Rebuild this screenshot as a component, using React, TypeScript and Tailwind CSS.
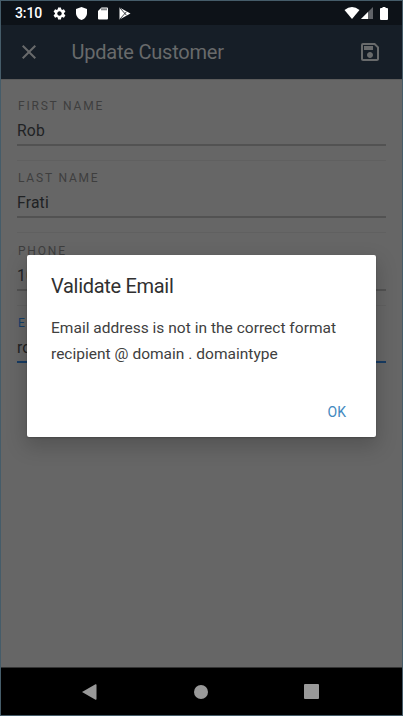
import React from 'react';
import { MdClose, MdOutlineSave, MdSettings } from 'react-icons/md';

type FieldProps = { label: string; value: string; active?: boolean };

function Field({ label, value, active = false }: FieldProps) {
  return (
    <div className="h-[72.4px] shrink-0">
      <div className={`box-content h-[15px] pt-[17px] pl-px text-[12px] leading-[16px] tracking-[1.8px] ${active ? 'text-[#153f6b]' : 'text-[#3e3e3e]'}`}>{label}</div>
      <div className={`box-content h-[26px] pt-[5px] text-[15.7px] leading-[26px] tracking-[0.2px] text-[#202224] border-b-2 ${active ? 'border-[#173b62]' : 'border-[#525252]'}`}>{value}</div>
      {!active && <div className="mt-[14px] h-px bg-[#606060]" />}
    </div>
  );
}

function StatusBar() {
  return (
    <div className="flex h-6 shrink-0 items-center bg-[#0d1218] pl-3.5 text-white">
      <span className="w-[37px] text-[14px] font-medium leading-6 tracking-[-0.1px]">3:10</span>
      <MdSettings className="h-[15px] w-[15px]" />
      <svg className="ml-[8.500px] h-[13px] w-[11px]" viewBox="0 0 11 13" fill="currentColor"><path d="M5.500 0 11 2v4c0 3.200-2.200 6-5.500 7C2.200 12 0 9.200 0 6V2Z" /></svg>
      <svg className="ml-[11.500px] h-[13px] w-[10px]" viewBox="0 0 10 13"><path fill="white" d="M3.500.5H9Q10 .5 10 1.500V11.500Q10 12.500 9 12.500H1Q0 12.500 0 11.500V4Z" /><path stroke="#0d1218" strokeWidth="1" d="M4 1.300v2M6 1.300v2M8 1.300v2" /></svg>
      <svg className="ml-[11px] h-[13px] w-[12px]" viewBox="0 0 12 13"><path fill="white" d="M.5.500 11.500 6.500.500 12.500Z" /><path stroke="#0d1218" strokeWidth=".8" fill="none" d="m1 1 6.500 7.300M1 12l6.500-7.300" /></svg>
      <div className="ml-auto mr-[14.500px] flex items-center">
        <svg className="h-[12px] w-[16px]" viewBox="0 0 16 12" fill="white"><path d="M.5 3Q8-3 15.500 3L8 12Z" /></svg>
        <svg className="ml-[1px] h-[12px] w-[12px]" viewBox="0 0 12 12"><path fill="#606368" d="M12 0v12H0Z" /><path fill="white" d="M7 5v7H0Z" /></svg>
        <svg className="ml-[7px] h-[13px] w-[8px]" viewBox="0 0 8 13" fill="white"><path d="M2.500 0h3v1H7q1 0 1 1v10q0 1-1 1H1q-1 0-1-1V2q0-1 1-1h1.500Z" /></svg>
      </div>
    </div>
  );
}

export default function App() {
  return (
    <div className="relative flex h-[716px] w-[403px] flex-col overflow-hidden border border-[#455c69] bg-[#666] font-['Roboto','Liberation_Sans',sans-serif]">
      <StatusBar />
      <header className="flex h-[54px] shrink-0 items-center bg-[#161e27] pr-5 pl-[15.500px] text-[#686a6b]">
        <MdClose className="h-6 w-6" />
        <h1 className="ml-[31px] text-[20px] leading-6 tracking-[-0.22px]">Update Customer</h1>
        <MdOutlineSave className="ml-auto h-6 w-6" />
      </header>
      <main className="flex flex-1 flex-col border-t border-[#5b5b5b] bg-[#666] px-4 pt-px">
        <Field label="FIRST NAME" value="Rob" />
        <Field label="LAST NAME" value="Frati" />
        <Field label="PHONE" value="10" />
        <Field label="E" value="ro" active />
      </main>
      <nav className="flex h-12 shrink-0 items-center border-t border-[#333] bg-black">
        <svg className="ml-[81px] h-4 w-[15px]" viewBox="0 0 15 16" fill="#999"><path d="M0 8 13.500.3Q14.500 0 14.500 1v14q0 1-1 .7Z" /></svg>
        <div className="ml-[97px] h-3.5 w-3.5 rounded-full bg-[#999]" />
        <div className="ml-[96px] h-[15px] w-[15px] rounded-[1px] bg-[#999]" />
      </nav>
      <div role="dialog" aria-label="Validate Email" className="absolute top-[254px] left-[26px] h-[182px] w-[349px] rounded-[2px] bg-white px-6 pt-[19px] shadow-[0_8px_20px_2px_rgba(0,0,0,0.18),0_1px_2px_rgba(0,0,0,0.2)]">
        <h2 className="text-[20px] leading-6 tracking-[-0.3px] text-[#303030]">Validate Email</h2>
        <p className="mt-[17px] whitespace-nowrap text-[15.5px] leading-[26px] tracking-[0.02px] text-[#404040]">Email address is not in the correct format<br />recipient @ domain . domaintype</p>
        <div className="mt-[35px] flex justify-end pr-[6px]"><button className="text-[14px] leading-5 text-[#4389c0]">OK</button></div>
      </div>
    </div>
  );
}
